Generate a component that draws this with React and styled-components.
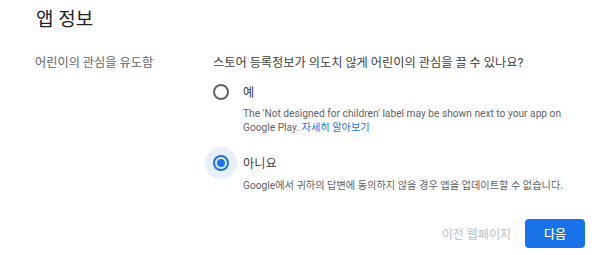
import React from "react";
import styled, { createGlobalStyle } from "styled-components";

const Global = createGlobalStyle`
  html, body { margin: 0; padding: 0; background: #fff; }
  body { font-family: Roboto, "Noto Sans CJK KR", sans-serif; -webkit-font-smoothing: antialiased; }
  * { box-sizing: border-box; }
`;

const Page = styled.div`
  width: 592px;
  height: 255px;
  padding: 8px 7px 0 35px;
`;

const Title = styled.h1`
  margin: 0 0 0 1px;
  font-size: 19px;
  font-weight: 400;
  line-height: 24px;
  color: #202124;
`;

const Section = styled.div`
  display: grid;
  grid-template-columns: 178px 1fr;
  margin-top: 23px;
`;

const Label = styled.div`
  font-size: 12.2px;
  line-height: 16px;
  color: #5f6368;
`;

const Content = styled.div`
  display: flex;
  flex-direction: column;
`;

const Question = styled.div`
  font-size: 12.2px;
  line-height: 16px;
  color: #3c4043;
`;

const OptionRow = styled.label`
  display: flex;
  align-items: center;
  gap: 6px;
  height: 32px;
  margin-top: ${(p) => p.$mt}px;
  font-size: 12.2px;
  color: #3c4043;
`;

const RadioWrap = styled.span`
  width: 32px;
  height: 32px;
  margin-left: -8px;
  border-radius: 50%;
  display: flex;
  align-items: center;
  justify-content: center;
  background: ${(p) => (p.$checked ? "#e8f0fe" : "transparent")};
`;

const RadioCircle = styled.span`
  width: 16px;
  height: 16px;
  border-radius: 50%;
  border: 2px solid ${(p) => (p.$checked ? "#1a73e8" : "#5f6368")};
  display: flex;
  align-items: center;
  justify-content: center;
`;

const RadioDot = styled.span`
  width: 8px;
  height: 8px;
  border-radius: 50%;
  background: #1a73e8;
`;

const Desc = styled.div`
  margin-left: 30px;
  margin-top: ${(p) => p.$mt}px;
  font-size: 10.2px;
  line-height: 14px;
  color: #5f6368;
`;

const Link = styled.a`
  color: #1a73e8;
  text-decoration: none;
`;

const Footer = styled.div`
  display: flex;
  justify-content: flex-end;
  align-items: center;
  margin-top: 26px;
`;

const TextButton = styled.button`
  height: 29px;
  padding: 0 14px;
  border: none;
  background: transparent;
  font-family: inherit;
  font-size: 12px;
  color: #bdc1c6;
`;

const PrimaryButton = styled.button`
  height: 29px;
  width: 60px;
  border: none;
  border-radius: 4px;
  background: #1a73e8;
  color: #fff;
  font-family: inherit;
  font-size: 12px;
  font-weight: 500;
`;

function Radio({ checked }) {
  return (
    <RadioWrap $checked={checked}>
      <RadioCircle $checked={checked}>{checked && <RadioDot />}</RadioCircle>
    </RadioWrap>
  );
}

export default function App() {
  return (
    <Page>
      <Global />
      <Title>앱 정보</Title>
      <Section>
        <Label>어린이의 관심을 유도함</Label>
        <Content>
          <Question>스토어 등록정보가 의도치 않게 어린이의 관심을 끌 수 있나요?</Question>
          <OptionRow $mt={5}>
            <Radio checked={false} />
            <span>예</span>
          </OptionRow>
          <Desc $mt={-1}>
            The 'Not designed for children' label may be shown next to your app on Google Play.{" "}
            <Link href="#">자세히 알아보기</Link>
          </Desc>
          <OptionRow $mt={12}>
            <Radio checked={true} />
            <span>아니요</span>
          </OptionRow>
          <Desc $mt={0}>Google에서 귀하의 답변에 동의하지 않을 경우 앱을 업데이트할 수 없습니다.</Desc>
        </Content>
      </Section>
      <Footer>
        <TextButton>이전 웹페이지</TextButton>
        <PrimaryButton>다음</PrimaryButton>
      </Footer>
    </Page>
  );
}
